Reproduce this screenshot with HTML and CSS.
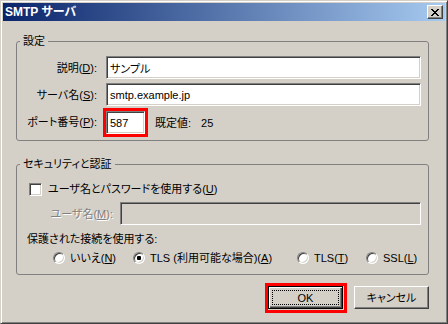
FILE: index.html
```html
<!DOCTYPE html>
<html>
<head>
    <meta charset="utf-8">
    <title>SMTP サーバ</title>
    <link rel="stylesheet" href="styles.css">
</head>
<body>
    <div class="window">
        <div class="titlebar">
            <span class="title">SMTP サーバ</span>
            <button class="close-btn" type="button" aria-label="閉じる">
                <svg width="8" height="7" viewBox="0 0 8 7" shape-rendering="crispEdges">
                    <path fill="#000" d="M0 0h2v1H0zM6 0h2v1H6zM1 1h2v1H1zM5 1h2v1H5zM2 2h4v1H2zM3 3h2v1H3zM2 4h4v1H2zM1 5h2v1H1zM5 5h2v1H5zM0 6h2v1H0zM6 6h2v1H6z"/>
                </svg>
            </button>
        </div>
        <div class="client">
            <fieldset class="group">
                <legend>設定</legend>
                <div class="form-grid">
                    <label for="description">説明(<u>D</u>):</label>
                    <input class="field" type="text" id="description" value="サンプル">
                    <label for="servername">サーバ名(<u>S</u>):</label>
                    <input class="field" type="text" id="servername" value="smtp.example.jp">
                    <label for="port">ポート番号(<u>P</u>):</label>
                    <div class="port-row">
                        <span class="highlight">
                            <input class="field port" type="text" id="port" value="587">
                        </span>
                        <span class="default-label">既定値:</span>
                        <span class="default-value">25</span>
                    </div>
                </div>
            </fieldset>

            <fieldset class="group group-security">
                <legend>セキュリティと認証</legend>
                <div class="check-row">
                    <input class="checkbox" type="checkbox" id="useauth">
                    <label for="useauth">ユーザ名とパスワードを使用する(<u>U</u>)</label>
                </div>
                <div class="user-row">
                    <label class="disabled-label" for="username">ユーザ名(<u>M</u>):</label>
                    <input class="field" type="text" id="username" disabled>
                </div>
                <div class="protect-label">保護された接続を使用する:</div>
                <div class="radio-row">
                    <label class="radio-item"><input class="radio" type="radio" name="secure">いいえ(<u>N</u>)</label>
                    <label class="radio-item"><input class="radio" type="radio" name="secure" checked>TLS (利用可能な場合)(<u>A</u>)</label>
                    <label class="radio-item"><input class="radio" type="radio" name="secure">TLS(<u>T</u>)</label>
                    <label class="radio-item"><input class="radio" type="radio" name="secure">SSL(<u>L</u>)</label>
                </div>
            </fieldset>

            <div class="buttons">
                <span class="highlight highlight-btn">
                    <button class="btn btn-default" type="button">OK</button>
                </span>
                <button class="btn" type="button">キャンセル</button>
            </div>
        </div>
    </div>
</body>
</html>
```

FILE: styles.css
```css
body {
    margin: 0;
    font-family: "Liberation Sans", "Noto Sans CJK JP", sans-serif;
    font-size: 11px;
    line-height: 14px;
    font-feature-settings: "palt";
    color: #000000;
    background-color: #d4d0c8;
}
.window {
    box-sizing: border-box;
    width: 448px;
    height: 324px;
    padding: 2px;
    border: 1px solid;
    border-color: #d4d0c8 #404040 #404040 #d4d0c8;
    box-shadow: inset 1px 1px #ffffff, inset -1px -1px #808080;
    background-color: #d4d0c8;
}
.titlebar {
    display: flex;
    align-items: flex-start;
    justify-content: space-between;
    height: 18px;
    background: linear-gradient(to right, #0a246a, #a6caf0);
}
.title {
    color: #ffffff;
    font-size: 12px;
    font-weight: bold;
    line-height: 18px;
    padding-left: 2px;
}
.close-btn {
    box-sizing: border-box;
    display: flex;
    align-items: center;
    justify-content: center;
    width: 16px;
    height: 14px;
    margin: 2px 2px 0 0;
    padding: 0 1px 0 0;
    border: 1px solid;
    border-color: #ffffff #404040 #404040 #ffffff;
    box-shadow: inset -1px -1px #808080;
    background-color: #d4d0c8;
}
.client {
    padding: 13px 16px 0 13px;
}
.group {
    margin: 0;
    padding: 8px 7px 6px 10px;
    border: 1px solid #808080;
    border-radius: 3px;
    min-width: 0;
}
.group legend {
    padding: 0 3px;
    margin-left: -7px;
}
.group-security {
    margin-top: 16px;
    padding-top: 10px;
    padding-bottom: 8px;
}
.form-grid {
    display: grid;
    grid-template-columns: 70px 1fr;
    column-gap: 9px;
    row-gap: 4px;
    align-items: center;
}
.form-grid label {
    justify-self: end;
    white-space: nowrap;
}
.field {
    box-sizing: border-box;
    width: 100%;
    height: 23px;
    margin: 0;
    padding: 0 3px;
    border: 1px solid;
    border-color: #808080 #ffffff #ffffff #808080;
    box-shadow: inset 1px 1px #404040, inset -1px -1px #d4d0c8;
    background-color: #ffffff;
    font: inherit;
    font-feature-settings: "palt";
    color: #000000;
    outline: none;
}
.field:disabled {
    background-color: #d4d0c8;
}
.port-row {
    display: flex;
    align-items: center;
    margin-top: 1px;
}
.highlight {
    display: flex;
    border: 3px solid #ff0000;
    margin: -3px;
}
.port {
    width: 39px;
}
.default-label {
    margin-left: 10px;
}
.default-value {
    margin-left: 10px;
}
.check-row {
    display: flex;
    align-items: center;
    height: 16px;
}
.checkbox {
    appearance: none;
    box-sizing: border-box;
    width: 13px;
    height: 13px;
    margin: 0 6px 0 2px;
    border: 1px solid;
    border-color: #808080 #ffffff #ffffff #808080;
    box-shadow: inset 1px 1px #404040, inset -1px -1px #d4d0c8;
    background-color: #ffffff;
}
.user-row {
    display: grid;
    grid-template-columns: 86px 1fr;
    column-gap: 7px;
    align-items: center;
    margin-top: 5px;
}
.disabled-label {
    justify-self: end;
    white-space: nowrap;
    color: #808080;
    text-shadow: 1px 1px #ffffff;
}
.protect-label {
    margin-top: 7px;
}
.radio-row {
    display: grid;
    grid-template-columns: 80px 164px 69px auto;
    align-items: center;
    height: 16px;
    margin-top: 4px;
    padding-left: 26px;
}
.radio-item {
    display: flex;
    align-items: center;
    white-space: nowrap;
}
.radio {
    appearance: none;
    box-sizing: border-box;
    width: 12px;
    height: 12px;
    margin: 0 5px 0 0;
    border: 1px solid;
    border-color: #808080 #ffffff #ffffff #808080;
    border-radius: 50%;
    box-shadow: inset 1px 1px #404040, inset -1px -1px #d4d0c8;
    background-color: #ffffff;
}
.radio:checked {
    background: radial-gradient(circle, #000000 0 2px, #ffffff 2.5px);
}
.buttons {
    display: flex;
    align-items: flex-start;
    justify-content: flex-end;
    gap: 11px;
    margin-top: 11px;
}
.highlight-btn {
    margin: -3px -4px -4px -3px;
    padding: 0 1px 1px 0;
}
.btn {
    box-sizing: border-box;
    width: 75px;
    height: 23px;
    padding: 0;
    border: 1px solid;
    border-color: #ffffff #404040 #404040 #ffffff;
    box-shadow: inset -1px -1px #808080;
    background-color: #d4d0c8;
    font: inherit;
    font-feature-settings: "palt";
    color: #000000;
}
.btn-default {
    border-color: #000000;
    box-shadow: inset 1px 1px #ffffff, inset -1px -1px #404040, inset -2px -2px #808080;
    outline: 1px dotted #000000;
    outline-offset: -5px;
}
```
